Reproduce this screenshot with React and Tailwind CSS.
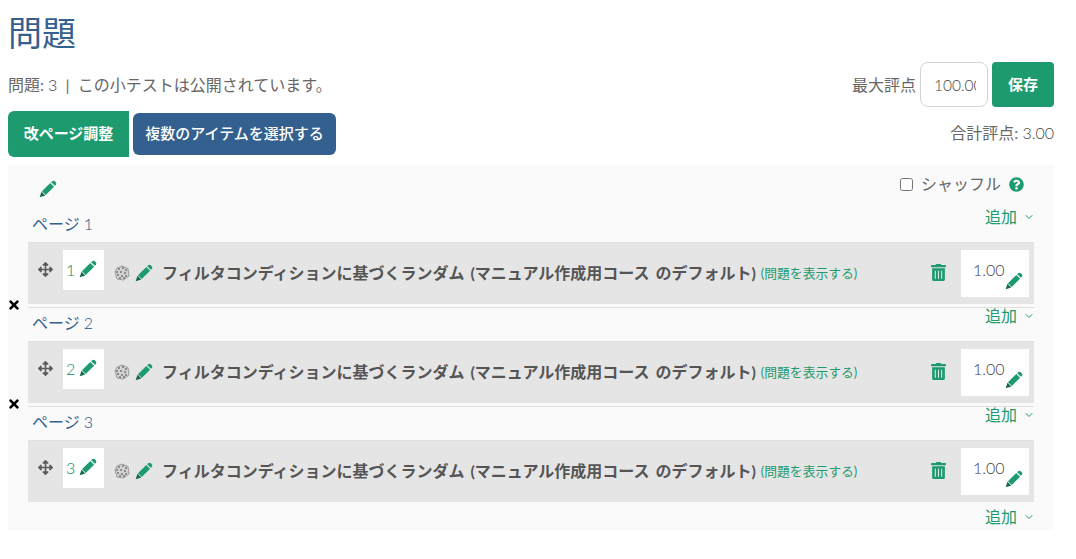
import React from 'react';
import { FaArrowsAlt, FaTrashAlt, FaQuestionCircle, FaTimes } from 'react-icons/fa';
import { ChevronDown } from 'lucide-react';

const slots = [1, 2, 3];

function Pencil({ className }) {
  return (
    <svg width="18" height="18" viewBox="0 0 16 16" className={`shrink-0 ${className}`} fill="currentColor">
      <path d="M2.6 9.9 L10 2.6 L13.4 6 L6 13.4 Z" />
      <path d="M2.2 10.4 L5.6 13.8 L0.6 15.4 Z" fill="#14694b" />
      <path d="M10.8 1.9 L11.6 1.1 C12.4 0.4 13.4 0.4 14.1 1.1 L14.9 1.9 C15.6 2.6 15.6 3.6 14.9 4.4 L14.1 5.2 Z" />
    </svg>
  );
}

function Dice() {
  const dots = [[5, 4], [9, 3], [12, 5], [3, 7], [7, 7], [11, 8], [4, 10], [8, 11], [12, 11], [6, 13], [10, 13]];
  return (
    <svg width="16" height="16" viewBox="0 0 16 16" className="shrink-0">
      <path d="M8 1 L14 3.5 L15 11 L9.5 15 L3 14 L1 7 L3 3 Z" fill="#d2d2d2" stroke="#8a8a8a" strokeWidth="0.8" />
      {dots.map(([x, y]) => (
        <circle key={`${x}-${y}`} cx={x} cy={y} r="0.8" fill="#333" />
      ))}
    </svg>
  );
}

function AddMenu() {
  return (
    <div className="flex items-center self-start h-[18px] -mt-[1px] text-[#1d9b6f] text-[16px] leading-[18px]">
      <span>追加</span>
      <ChevronDown size={12} strokeWidth={2} className="ml-[6px] text-[#1d9b6f]" />
    </div>
  );
}

function PageHeader({ n }) {
  return (
    <div className="flex justify-between h-[33px] pl-[24px] pr-[19px]">
      <div className="pt-[6px] text-[16px] leading-[18px] text-[#34608f]">ページ <span className="font-light text-[#1c4f88]">{n}</span></div>
      <AddMenu />
    </div>
  );
}

function Slot({ n }) {
  return (
    <div className="relative">
      <PageHeader n={n} />
      <div className="mx-[20px] h-[62px] bg-[#e5e5e5] border-t border-[#dfdfdf] flex items-start">
        <FaArrowsAlt size={15} className="ml-[10px] mt-[19px] text-[#5c5c5c] shrink-0" />
        <div className="ml-[10px] mt-[7px] w-[41px] h-[40px] bg-white flex items-center pl-[3px] shrink-0">
          <span className="text-[#0a8f60] text-[16px] font-light leading-[20px]">{n}</span>
          <Pencil className="ml-[4px] mb-[2px] text-[#1d9b6f]" />
        </div>
        <div className="ml-[10px] mt-[19px] flex items-center leading-[20px]">
          <Dice />
          <Pencil className="ml-[5px] text-[#1d9b6f]" />
          <span className="ml-[9px] text-[16px] font-bold text-[#555] whitespace-nowrap [word-spacing:2px]">フィルタコンディションに基づくランダム (マニュアル作成用コース のデフォルト)</span>
          <span className="ml-[5px] pt-[1px] text-[12.8px] text-[#1d9b6f] whitespace-nowrap">(問題を表示する)</span>
        </div>
        <FaTrashAlt size={17} className="ml-auto mt-[21px] text-[#1d9b6f] shrink-0" />
        <div className="relative ml-[14px] mr-[5px] mt-[7px] w-[68px] h-[47px] bg-white shrink-0 text-[16px] font-light leading-[24px] text-[#444] pl-[12px] pt-[8px]">
          1.00
          <Pencil className="absolute right-[6px] bottom-[7px] text-[#1d9b6f]" />
        </div>
      </div>
      {n < 3 && (
        <div className="relative mt-[3px] mx-[20px] border-t border-[#dedede]">
          <FaTimes size={14} className="absolute left-[-21px] top-[-10px] text-black" />
        </div>
      )}
    </div>
  );
}

export default function App() {
  return (
    <div className="h-[559px] bg-white pl-[8px] pr-[22px] overflow-hidden text-[16px] text-[#666] font-['Lato','Noto_Sans_CJK_JP',sans-serif]">
      <h1 className="pt-[11px] text-[34px] font-normal leading-[44px] text-[#34608f]">問題</h1>

      <div className="mt-[7px] flex items-center justify-between h-[45px]">
        <div className="pt-[1px]">問題: <span className="font-light text-[#444]">3</span> &nbsp;|&nbsp; この小テストは公開されています。</div>
        <div className="flex items-center">
          <span>最大評点</span>
          <input readOnly value="100.00" className="ml-[4px] w-[68px] h-[45px] rounded-lg border border-[#d5d5d5] bg-white pl-[13px] pr-[11px] text-[15.5px] font-light text-[#444]" />
          <button className="ml-[4px] w-[62px] h-[45px] rounded bg-[#1d9b6f] text-white font-bold text-[15px]">保存</button>
        </div>
      </div>

      <div className="mt-[4px] flex items-center justify-between h-[46px]">
        <div className="flex items-center">
          <button className="w-[121px] h-[46px] pb-[2px] rounded-l-md bg-[#1d9b6f] text-white font-bold text-[15px]">改ページ調整</button>
          <button className="ml-[4px] w-[203px] h-[42px] pb-[2px] rounded-md bg-[#34608f] text-white font-medium text-[15px]">複数のアイテムを選択する</button>
        </div>
        <div className="pb-[2px]">合計評点: <span className="font-light text-[#444]">3.00</span></div>
      </div>

      <div className="mt-[8px] h-[365px] bg-[#fafafa]">
        <div className="h-[44px] flex items-start justify-between">
          <Pencil className="ml-[31px] mt-[15px] text-[#1d9b6f]" />
          <div className="flex items-center mt-[7px] mr-[30px]">
            <input type="checkbox" readOnly className="w-[13px] h-[13px] ml-[1px]" />
            <span className="ml-[8px]">シャッフル</span>
            <FaQuestionCircle size={15} className="ml-[8px] text-[#1d9b6f]" />
          </div>
        </div>
        {slots.map((n) => <Slot key={n} n={n} />)}
        <div className="flex justify-end pr-[19px] pt-[7px]"><AddMenu /></div>
      </div>
    </div>
  );
}
